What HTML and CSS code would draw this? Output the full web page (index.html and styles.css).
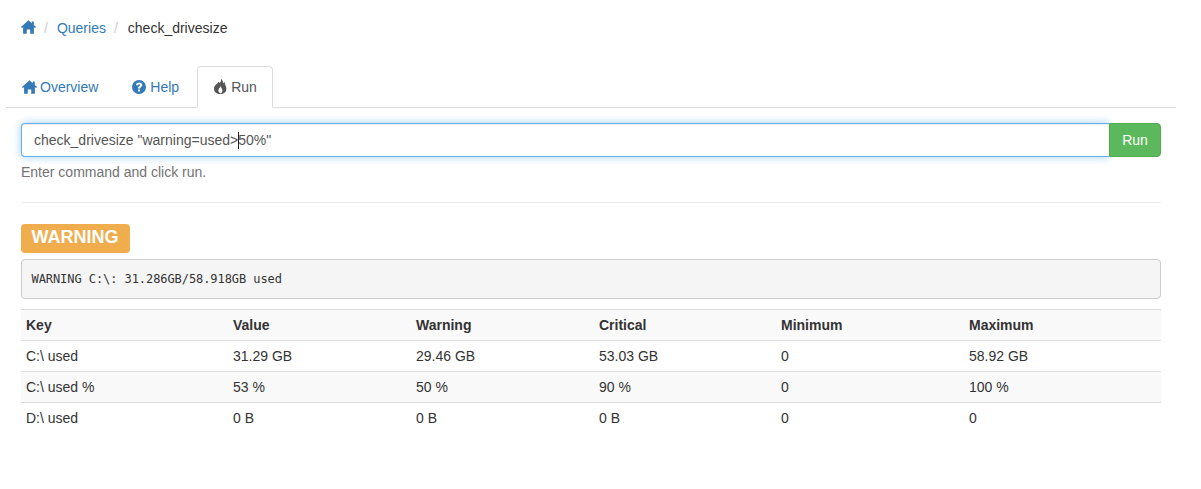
FILE: index.html
```html
<!DOCTYPE html>
<html lang="en">
<head>
<meta charset="utf-8">
<title>check_drivesize</title>
<link rel="stylesheet" href="styles.css">
</head>
<body>
<div class="page">
  <ol class="breadcrumb">
    <li><a href="#" aria-label="Home"><svg class="icon icon-crumb" viewBox="0 0 15 14"><path d="M7.5 0.2 L10.8 3.2 V1.4 H12.8 V5 L15 7 L14.2 8 L12.9 7.2 V13.8 H9.2 V9.4 H5.8 V13.8 H2.1 V7.2 L0.8 8 L0 7 Z"/></svg></a></li>
    <li class="sep">/</li>
    <li><a href="#">Queries</a></li>
    <li class="sep">/</li>
    <li class="current">check_drivesize</li>
  </ol>
  <ul class="tabs">
    <li class="tab"><a href="#"><svg class="icon icon-tab" viewBox="0 0 15 14"><path d="M7.5 0.2 L10.8 3.2 V1.4 H12.8 V5 L15 7 L14.2 8 L12.9 7.2 V13.8 H9.2 V9.4 H5.8 V13.8 H2.1 V7.2 L0.8 8 L0 7 Z"/></svg>Overview</a></li>
    <li class="tab tab-help"><a href="#"><svg class="icon icon-help" viewBox="0 0 14 14"><path fill-rule="evenodd" d="M7 0 A7 7 0 1 1 7 14 A7 7 0 1 1 7 0 Z M7.2 2.4 C5.5 2.4 4.3 3.2 3.9 4.9 L5.8 5.4 C6 4.6 6.4 4.2 7.1 4.2 C7.7 4.2 8.1 4.5 8.1 5 C8.1 5.5 7.8 5.8 7.2 6.3 C6.4 6.9 6 7.5 6 8.6 H8 C8 8 8.2 7.7 8.8 7.2 C9.6 6.6 10.2 6 10.2 4.9 C10.2 3.4 8.9 2.4 7.2 2.4 Z M6 9.4 V11.4 H8 V9.4 Z"/></svg>Help</a></li>
    <li class="tab tab-active"><a href="#"><svg class="icon icon-fire" viewBox="0 0 14 15"><path fill-rule="evenodd" d="M8 0 C8.6 2 7.4 3 6.4 4 L5.4 2.6 C5.4 4.6 1 6 1 10 C1 12.6 3 14.4 5.4 15 H9 C11.6 14.4 13.4 12.6 13.4 9.8 C13.4 7 11.6 5.4 11.6 2.8 L10.4 4.6 C10.2 2.6 9.6 1 8 0 Z M7.6 7 C8 9 9.6 10 9.4 12 C9.2 13.2 8.6 14 7.8 14.4 C6.4 14 5.2 12.8 5.4 11 C5.6 9.4 7.2 8.8 7.6 7 Z"/></svg>Run</a></li>
  </ul>
  <div class="content">
    <form class="command">
      <div class="input-wrap">
        <input class="command-input" type="text" value="check_drivesize &quot;warning=used&gt;50%&quot;" aria-label="Command">
        <span class="caret"></span>
      </div>
      <button class="run" type="button">Run</button>
    </form>
    <p class="help-text">Enter command and click run.</p>
    <hr class="rule">
    <div class="status-line"><span class="label-warning">WARNING</span></div>
    <pre class="output">WARNING C:\: 31.286GB/58.918GB used</pre>
    <table class="perf">
      <thead>
        <tr><th class="c-key">Key</th><th class="c-value">Value</th><th class="c-warn">Warning</th><th class="c-crit">Critical</th><th class="c-min">Minimum</th><th class="c-max">Maximum</th></tr>
      </thead>
      <tbody>
        <tr><td>C:\ used</td><td>31.29 GB</td><td>29.46 GB</td><td>53.03 GB</td><td>0</td><td>58.92 GB</td></tr>
        <tr><td>C:\ used %</td><td>53 %</td><td>50 %</td><td>90 %</td><td>0</td><td>100 %</td></tr>
        <tr><td>D:\ used</td><td>0 B</td><td>0 B</td><td>0 B</td><td>0</td><td>0</td></tr>
      </tbody>
    </table>
  </div>
</div>
</body>
</html>
```

FILE: styles.css
```css
* { box-sizing: border-box; }
html, body { margin: 0; padding: 0; }
body {
  font-family: "Liberation Sans", Arial, sans-serif;
  font-size: 14px;
  line-height: 20px;
  color: #333;
  background: #fff;
}
a { color: #337ab7; text-decoration: none; }
.page { padding: 18px 25px 0 6px; width: 1201px; }
.icon { fill: currentColor; display: inline-block; }

.breadcrumb {
  list-style: none;
  margin: 0 0 28px;
  padding: 0 0 0 15px;
  display: flex;
  align-items: center;
  height: 20px;
}
.breadcrumb .sep { color: #ccc; padding: 0 9px 0 8px; }
.breadcrumb .current { color: #333; margin-left: 1px; }
.icon-crumb { width: 15px; height: 14px; display: block; margin-top: -3px; }

.tabs {
  list-style: none;
  margin: 0;
  padding: 0;
  display: flex;
  border-bottom: 1px solid #ddd;
  height: 42px;
}
.tab { margin-bottom: -1px; margin-right: 2px; }
.tab a {
  display: flex;
  align-items: center;
  height: 42px;
  padding: 0 15px;
  border: 1px solid transparent;
  border-radius: 4px 4px 0 0;
}
.tab-active a {
  color: #555;
  background: #fff;
  border-color: #ddd #ddd #fff;
}
.icon-tab { width: 15px; height: 14px; margin: -1px 3px 0 0; }
.icon-help { width: 14px; height: 14px; margin: -1px 4px 0 0; }
.icon-fire { width: 14px; height: 15px; margin: -2px 4px 0 0; }

.content { padding: 15px 15px 0 15px; }
.command { display: flex; height: 34px; margin: 0; }
.input-wrap { position: relative; flex: 1; }
.command-input {
  display: block;
  width: 100%;
  height: 34px;
  padding: 6px 12px;
  font: inherit;
  color: #555;
  background: #fff;
  border: 1px solid #66afe9;
  border-right: 0;
  border-radius: 4px 0 0 4px;
  outline: 0;
  box-shadow: inset 0 1px 1px rgba(0,0,0,.075), 0 0 8px rgba(102,175,233,.6);
}
.caret {
  position: absolute;
  left: 217px;
  top: 9px;
  width: 1px;
  height: 17px;
  background: #222;
}
.run {
  position: relative;
  width: 52px;
  height: 34px;
  padding: 0;
  font: inherit;
  color: #fff;
  background: #5cb85c;
  border: 1px solid #4cae4c;
  border-radius: 0 4px 4px 0;
}
.help-text { margin: 5px 0 0; color: #737373; height: 20px; }
.rule { margin: 20px 0; border: 0; border-top: 1px solid #eee; height: 0; }
.status-line { height: 30px; margin-bottom: 6px; padding-top: 1px; }
.label-warning {
  display: block;
  width: 109px;
  height: 29px;
  padding: 0 0 0 10.5px;
  font-size: 18px;
  font-weight: bold;
  line-height: 27px;
  color: #fff;
  background: #f0ad4e;
  border-radius: 4px;
}
.output {
  margin: 0 0 10px;
  height: 40px;
  padding: 9.5px;
  font-family: "DejaVu Sans Mono", monospace;
  font-size: 12px;
  letter-spacing: -0.07px;
  line-height: 18.5px;
  color: #333;
  background: #f5f5f5;
  border: 1px solid #ccc;
  border-radius: 4px;
}
.perf { width: 100%; border-collapse: collapse; table-layout: fixed; }
.perf th, .perf td {
  height: 31px;
  padding: 5px;
  text-align: left;
  border-top: 1px solid #ddd;
  line-height: 20px;
  vertical-align: top;
}
.perf th { font-weight: bold; }
.perf thead tr { background: #f9f9f9; }
.perf thead th { border-bottom: 1px solid #ddd; }
.perf tbody tr:nth-child(even) { background: #f9f9f9; }
.c-key { width: 207px; }
.c-value { width: 183px; }
.c-warn { width: 183px; }
.c-crit { width: 182px; }
.c-min { width: 188px; }
.c-max { width: 197px; }
```
